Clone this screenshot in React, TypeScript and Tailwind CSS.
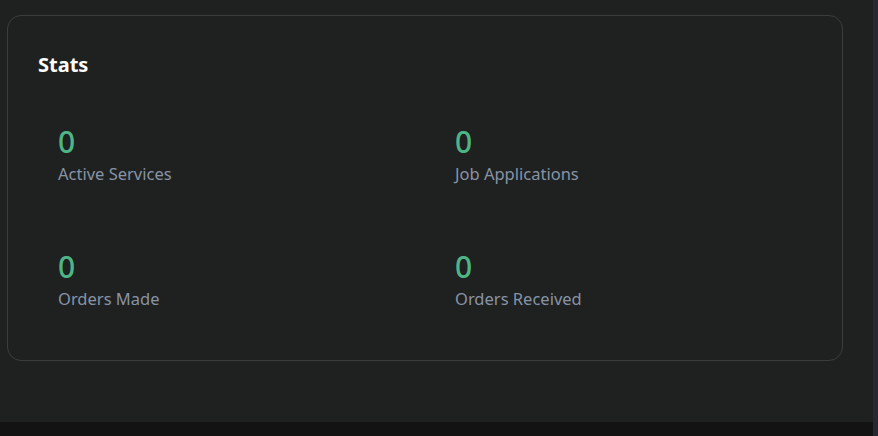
const stats = [
  { value: 0, label: 'Active Services' },
  { value: 0, label: 'Job Applications' },
  { value: 0, label: 'Orders Made' },
  { value: 0, label: 'Orders Received' },
];

export default function App() {
  return (
    <div
      className="flex h-[436px] w-[878px] overflow-hidden bg-[#1e211f]"
      style={{ fontFamily: '"Noto Sans", "Open Sans", sans-serif' }}
    >
      <div className="flex flex-1 flex-col">
        <div className="flex-1 pl-[7px] pt-[15px]">
          <div className="w-[836px] rounded-[14px] border border-[#3a3e3b] px-[30px] pt-[34px] pb-[49px]">
            <h2 className="text-[20px] font-bold leading-[30px] text-white">Stats</h2>
            <div className="mt-[42px] grid grid-cols-2 gap-x-5 gap-y-[61px]">
              {stats.map((stat) => (
                <div key={stat.label} className="px-5">
                  <div className="text-[30px] leading-[40px] font-medium text-[#4db586]">
                    {stat.value}
                  </div>
                  <div className="text-[16.5px] leading-[24px] text-[#8893a6]">
                    {stat.label}
                  </div>
                </div>
              ))}
            </div>
          </div>
        </div>
        <div className="h-[14px] bg-[#131313]" />
      </div>
      <div className="w-[5px] bg-[#272832]" />
    </div>
  );
}
